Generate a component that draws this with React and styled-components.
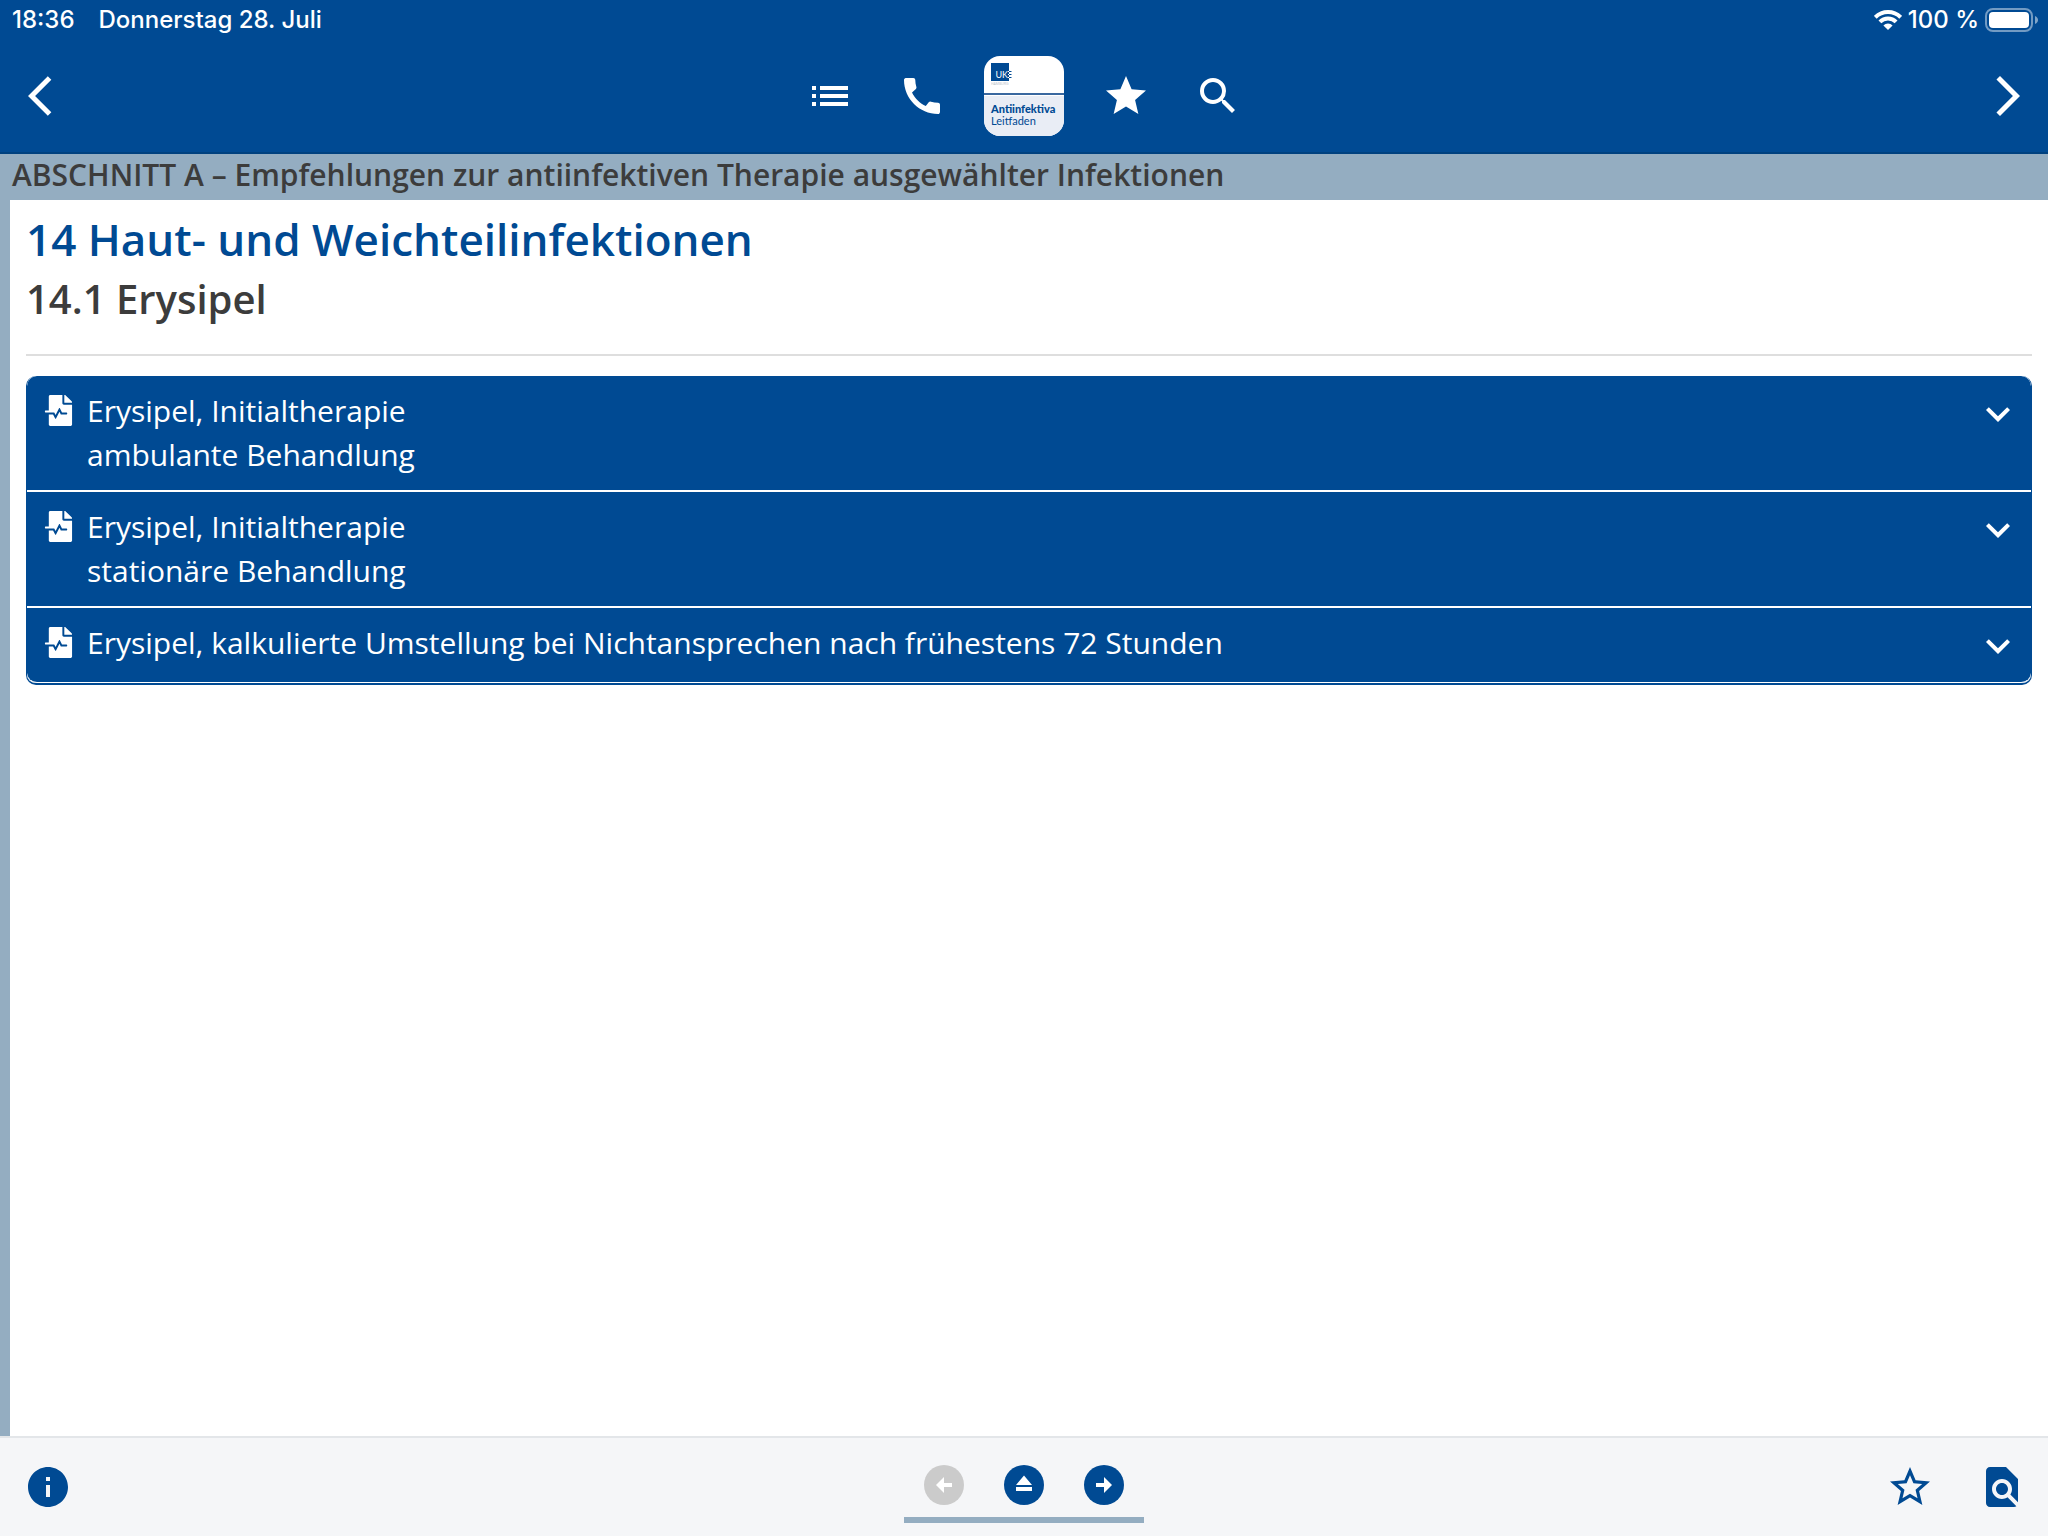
import styled, {createGlobalStyle} from "styled-components";
import {useState} from "react";
import {MdCall, MdExpandMore, MdFindInPage, MdInfo, MdList, MdSearch, MdStar, MdStarBorder} from "react-icons/md";
import {FaFileMedicalAlt} from "react-icons/fa";

const BLUE = '#004a93';
const STEEL = '#94adc1';

const GlobalStyle = createGlobalStyle`
    * {
        box-sizing: border-box;
    }

    body {
        margin: 0;
        background: #fff;
        font-family: "Open Sans", "Noto Sans", sans-serif;
        color: #3c3c3c;
    }

    button {
        margin: 0;
        padding: 0;
        border: none;
        background: none;
        color: inherit;
        font: inherit;
        cursor: pointer;
    }

    svg {
        display: block;
        flex: none;
    }
`;

const Page = styled.div`
    min-height: 100vh;
    display: flex;
    flex-direction: column;
`;

const Header = styled.header`
    background: ${BLUE};
    color: #fff;
    border-bottom: 2px solid #00417f;
`;

const StatusBar = styled.div`
    height: 40px;
    padding: 0 10px 0 12px;
    display: flex;
    align-items: center;
    justify-content: space-between;
    font-family: Inter, "Liberation Sans", sans-serif;
    font-size: 24px;
    font-weight: 500;
`;

const StatusGroup = styled.div`
    display: flex;
    align-items: center;
    gap: ${({$gap}) => $gap}px;
`;

const StatusText = styled.span`
    padding-bottom: 2px;
`;

const NavBar = styled.nav`
    height: 112px;
    padding: 0 16px 0 28px;
    display: grid;
    grid-template-columns: 1fr auto 1fr;
    align-items: center;
`;

const NavCenter = styled.div`
    display: flex;
    align-items: center;
    margin-right: 12px;
`;

const IconButton = styled.button`
    width: ${({$width = 92}) => $width}px;
    height: 92px;
    display: flex;
    align-items: center;
    justify-content: center;
    justify-self: ${({$side = 'auto'}) => $side};
    font-size: 48px;
`;

const LogoTile = styled.div`
    width: 80px;
    height: 80px;
    border-radius: 16px;
    overflow: hidden;
    background: #fff;
    color: ${BLUE};
    display: flex;
    flex-direction: column;
    text-align: left;
`;

const LogoTop = styled.div`
    height: 39px;
    padding: 7px;
    border-bottom: 2px solid #3a689f;
`;

const LogoBottom = styled.div`
    flex: 1;
    margin-top: 1px;
    padding: 7px 0 0 7px;
    background: #e9edf5;
    font-family: Lato, sans-serif;
    font-size: 11px;
    line-height: 12px;
    white-space: nowrap;
`;

const LogoName = styled.b`
    font-weight: 900;
`;

const SectionBar = styled.div`
    padding: 1px 12px 5px;
    background: ${STEEL};
    font-size: 30px;
    font-weight: 600;
    line-height: 40px;
`;

const Content = styled.main`
    flex: 1;
    padding: 9px 16px 20px;
    border-left: 10px solid ${STEEL};
`;

const ChapterTitle = styled.h1`
    margin: 0;
    color: ${BLUE};
    font-size: 44px;
    font-weight: 600;
    line-height: 60px;
`;

const SubTitle = styled.h2`
    margin: 0;
    font-size: 40px;
    font-weight: 600;
    line-height: 60px;
`;

const Divider = styled.hr`
    margin: 25px 0 20px;
    border: none;
    border-top: 2px solid #dedede;
`;

const Accordion = styled.div`
    border: solid ${BLUE};
    border-width: 0 1px 2px;
    border-radius: 10px;
    overflow: hidden;
    background: #fff;
    display: flex;
    flex-direction: column;
    gap: 2px;
`;

const AccordionItem = styled.button`
    width: 100%;
    padding: 13px 9px 13px 16px;
    display: flex;
    align-items: flex-start;
    background: ${BLUE};
    color: #fff;
    font-size: 30px;
    line-height: 44px;
    text-align: left;

    &:first-child {
        border-radius: 10px 10px 0 0;
    }

    &:last-child {
        padding-bottom: 17px;
        border-bottom: 1px solid #fff;
        border-radius: 0 0 10px 10px;
    }
`;

const ItemIcon = styled.span`
    width: 44px;
    padding-top: 6px;
    font-size: 31px;
`;

const ItemText = styled.span`
    flex: 1;
    white-space: pre-line;
`;

const ItemChevron = styled.span`
    height: 44px;
    padding-top: 1px;
    font-size: 48px;
`;

const Footer = styled.footer`
    height: 100px;
    display: grid;
    grid-template-columns: 1fr auto 1fr;
    border-top: 2px solid #e3e6e9;
    background: #f5f6f8;
    color: ${BLUE};
`;

const FooterSide = styled.div`
    display: flex;
    align-items: center;
    justify-content: ${({$end}) => $end ? 'flex-end' : 'flex-start'};
    padding-left: 2px;
`;

const Pager = styled.div`
    display: flex;
    justify-content: center;
    align-self: end;
    width: 240px;
    height: 70px;
    margin-bottom: 13px;
    padding-bottom: 12px;
    border-bottom: 6px solid ${STEEL};
`;

const PagerButton = styled.button`
    width: 80px;
    display: flex;
    justify-content: center;
    align-items: flex-end;
    color: ${BLUE};

    &:disabled {
        color: #cbcbcb;
        cursor: default;
    }
`;

const Wifi = () => (
    <svg width="28" height="20" viewBox="0 0 28 20" fill="none" stroke="#fff" strokeWidth="4">
        <path d="M1.3 7.3a18 18 0 0 1 25.4 0"/>
        <path d="M5.9 11.9a11.5 11.5 0 0 1 16.2 0"/>
        <path d="M14 20l-4.6-4.6a6.5 6.5 0 0 1 9.2 0z" fill="#fff" stroke="none"/>
    </svg>
);

const Battery = () => (
    <svg width="53" height="24" viewBox="0 0 53 24" fill="#fff">
        <rect x="1" y="1" width="46" height="22" rx="7" fill="none" stroke="#fff" strokeOpacity=".45" strokeWidth="2"/>
        <rect x="4" y="4" width="40" height="16" rx="4"/>
        <path d="M50 8c4 1.500 4 6.500 0 8z" fillOpacity=".5"/>
    </svg>
);

const ArrowIos = ({d}) => (
    <svg width="48" height="48" viewBox="0 0 24 24" fill="currentColor">
        <path d={d}/>
    </svg>
);

const UkeMark = () => (
    <svg width="22" height="24" viewBox="0 0 22 24">
        <rect width="18" height="18" fill={BLUE}/>
        <text x="4.500" y="15" fill="#fff" fontFamily="Lato, sans-serif" fontSize="9">UK</text>
        <path d="M17 8.500h1M17 11.500h1M17 14.500h1" stroke="#fff"/>
        <path d="M18 8.500h2.500M18 11.500h2.500M18 14.500h2.500" stroke={BLUE}/>
        <text x="0" y="22" fill="#b5bcc6" fontFamily="Open Sans, sans-serif" fontSize="3.500">HAMBURG</text>
    </svg>
);

const CircleIcon = ({d}) => (
    <svg width="40" height="40" viewBox="0 0 40 40">
        <circle cx="20" cy="20" r="20" fill="currentColor"/>
        <path d={d} fill="#fff"/>
    </svg>
);

const items = [
    {id: 1, text: 'Erysipel, Initialtherapie\nambulante Behandlung'},
    {id: 2, text: 'Erysipel, Initialtherapie\nstationäre Behandlung'},
    {id: 3, text: 'Erysipel, kalkulierte Umstellung bei Nichtansprechen nach frühestens 72 Stunden'},
];

const App = () => {

    const [openItem, setOpenItem] = useState(null);

    return (
        <Page>
            <GlobalStyle/>
            <Header>
                <StatusBar>
                    <StatusGroup $gap={24}>
                        <StatusText>18:36</StatusText>
                        <StatusText>Donnerstag 28. Juli</StatusText>
                    </StatusGroup>
                    <StatusGroup $gap={6}>
                        <Wifi/>
                        <StatusText>100 %</StatusText>
                        <Battery/>
                    </StatusGroup>
                </StatusBar>
                <NavBar>
                    <IconButton $width={48} aria-label="Zurück">
                        <ArrowIos d="M11.670 3.870L9.900 2.100 0 12l9.900 9.900 1.770-1.770L3.540 12z"/>
                    </IconButton>
                    <NavCenter>
                        <IconButton aria-label="Inhalt"><MdList/></IconButton>
                        <IconButton aria-label="Kontakte"><MdCall/></IconButton>
                        <IconButton $width={112} aria-label="Startseite">
                            <LogoTile>
                                <LogoTop><UkeMark/></LogoTop>
                                <LogoBottom>
                                    <LogoName>Antiinfektiva</LogoName><br/>
                                    Leitfaden
                                </LogoBottom>
                            </LogoTile>
                        </IconButton>
                        <IconButton aria-label="Favoriten"><MdStar/></IconButton>
                        <IconButton aria-label="Suche"><MdSearch/></IconButton>
                    </NavCenter>
                    <IconButton $width={48} $side="end" aria-label="Weiter">
                        <ArrowIos d="M6.230 20.230L8 22l10-10L8 2 6.230 3.770 14.460 12z"/>
                    </IconButton>
                </NavBar>
            </Header>
            <SectionBar>ABSCHNITT A – Empfehlungen zur antiinfektiven Therapie ausgewählter Infektionen</SectionBar>
            <Content>
                <ChapterTitle>14 Haut- und Weichteilinfektionen</ChapterTitle>
                <SubTitle>14.1 Erysipel</SubTitle>
                <Divider/>
                <Accordion>
                    {
                        items.map(({id, text}) => (
                            <AccordionItem
                                key={id}
                                aria-expanded={openItem === id}
                                onClick={() => setOpenItem(openItem === id ? null : id)}
                            >
                                <ItemIcon><FaFileMedicalAlt/></ItemIcon>
                                <ItemText>{text}</ItemText>
                                <ItemChevron><MdExpandMore/></ItemChevron>
                            </AccordionItem>
                        ))
                    }
                </Accordion>
            </Content>
            <Footer>
                <FooterSide>
                    <IconButton aria-label="Info"><MdInfo/></IconButton>
                </FooterSide>
                <Pager>
                    <PagerButton disabled aria-label="Vorherige Seite">
                        <CircleIcon d="M12 20l8-8v6h8v4h-8v6z"/>
                    </PagerButton>
                    <PagerButton aria-label="Nach oben">
                        <CircleIcon d="M20 10.500l8 9.500H12zM12 22h16v4H12z"/>
                    </PagerButton>
                    <PagerButton aria-label="Nächste Seite">
                        <CircleIcon d="M28 20l-8-8v6h-8v4h8v6z"/>
                    </PagerButton>
                </Pager>
                <FooterSide $end>
                    <IconButton aria-label="Favorit"><MdStarBorder/></IconButton>
                    <IconButton aria-label="Auf der Seite suchen"><MdFindInPage/></IconButton>
                </FooterSide>
            </Footer>
        </Page>
    )
}

export default App;
